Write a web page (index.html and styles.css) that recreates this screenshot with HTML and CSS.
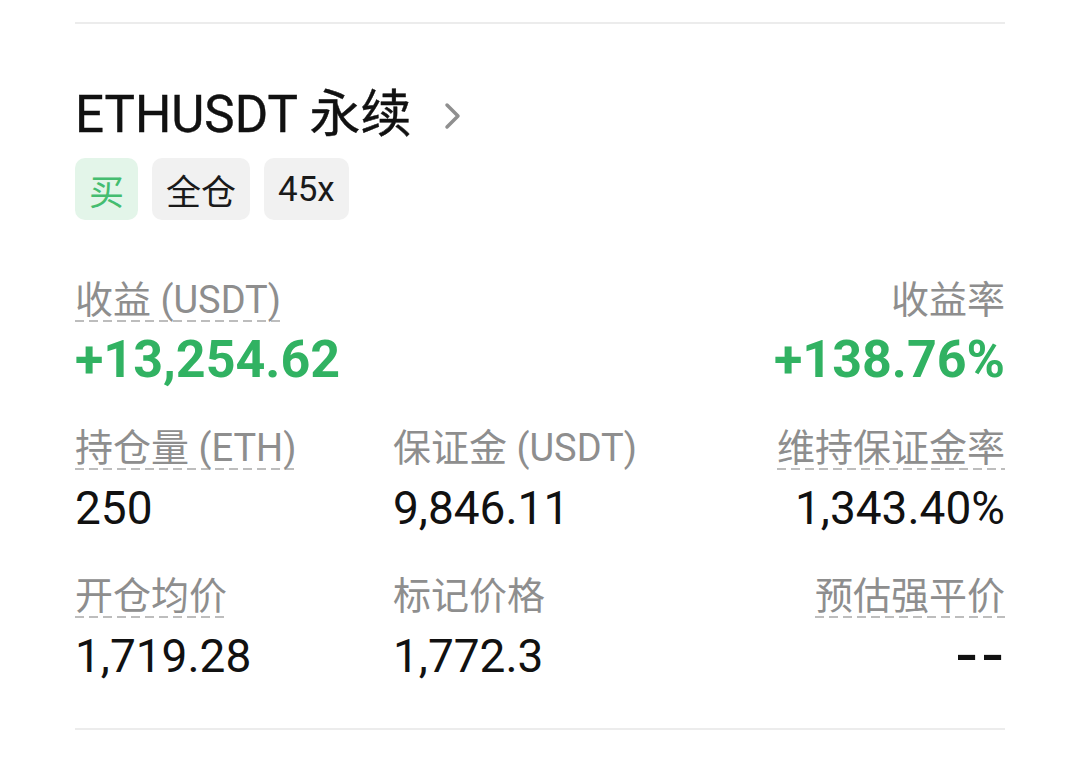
FILE: index.html
```html
<!DOCTYPE html>
<html lang="zh-CN">
<head>
    <meta charset="UTF-8">
    <meta name="viewport" content="width=device-width, initial-scale=1.0">
    <title>ETHUSDT 永续 - 持仓</title>
    <link rel="stylesheet" href="styles.css">
</head>
<body>
    <div class="position-card">
        <div class="divider"></div>

        <div class="symbol">
            <span class="symbol-name">ETHUSDT 永续</span>
            <svg class="chevron" width="22" height="30" viewBox="0 0 22 30">
                <polyline points="5,4 16,15 5,26" fill="none" stroke="#8f8f8f" stroke-width="3.5" stroke-linecap="round" stroke-linejoin="round"/>
            </svg>
        </div>

        <div class="tags">
            <span class="tag tag-buy">买</span>
            <span class="tag">全仓</span>
            <span class="tag">45x</span>
        </div>

        <div class="stats">
            <div class="stat">
                <span class="stat-label tip">收益 (USDT)</span>
                <span class="stat-value pnl">+13,254.62</span>
            </div>
            <div class="stat right col-3">
                <span class="stat-label">收益率</span>
                <span class="stat-value pnl">+138.76%</span>
            </div>

            <div class="stat">
                <span class="stat-label tip">持仓量 (ETH)</span>
                <span class="stat-value">250</span>
            </div>
            <div class="stat">
                <span class="stat-label">保证金 (USDT)</span>
                <span class="stat-value">9,846.11</span>
            </div>
            <div class="stat right">
                <span class="stat-label tip">维持保证金率</span>
                <span class="stat-value">1,343.40%</span>
            </div>

            <div class="stat">
                <span class="stat-label tip">开仓均价</span>
                <span class="stat-value">1,719.28</span>
            </div>
            <div class="stat">
                <span class="stat-label">标记价格</span>
                <span class="stat-value">1,772.3</span>
            </div>
            <div class="stat right">
                <span class="stat-label tip">预估强平价</span>
                <span class="stat-value empty">--</span>
            </div>
        </div>

        <div class="divider"></div>
    </div>
</body>
</html>
```

FILE: styles.css
```css
/* Base */
* {
    margin: 0;
    padding: 0;
    box-sizing: border-box;
}

body {
    background: #fff;
    color: #111;
    font-family: Roboto, "Noto Sans CJK SC", sans-serif;
}

.position-card {
    margin: 0 75px;
    padding-top: 22px;
}

.divider {
    height: 2px;
    background: #ececec;
}

/* Symbol header */
.symbol {
    display: flex;
    align-items: center;
    gap: 30px;
    margin-top: 62px;
    height: 58px;
}

.symbol-name {
    font-size: 51px;
    line-height: 58px;
    font-weight: 400;
    color: #111;
    -webkit-text-stroke: 0.4px #111;
}

.chevron {
    margin-top: 2px;
}

.tags {
    display: flex;
    gap: 14px;
    margin-top: 14px;
}

.tag {
    height: 62px;
    min-width: 62px;
    padding: 0 14px;
    display: flex;
    align-items: center;
    justify-content: center;
    font-size: 35px;
    background: #f1f1f1;
    border-radius: 10px;
    color: #1a1a1a;
}

.tag-buy {
    background: #e3f5e9;
    color: #45bd70;
}

/* Stats grid */
.stats {
    display: grid;
    grid-template-columns: 318px 1fr 1fr;
    row-gap: 40px;
    margin-top: 58px;
    margin-bottom: 46px;
}

.stat {
    display: flex;
    flex-direction: column;
    align-items: flex-start;
    gap: 12px;
}

.stat.right {
    align-items: flex-end;
}

.col-3 {
    grid-column: 3;
}

.stat-label {
    font-size: 38px;
    line-height: 44px;
    color: #8e8e8e;
}

/* dashed hint underline */
.stat-label.tip {
    background: repeating-linear-gradient(to right, #bdbdbd 0 9px, transparent 9px 14px) left bottom / 100% 2px no-repeat;
}

.stat-value {
    font-size: 46px;
    line-height: 52px;
    color: #111;
}

.stat-value.pnl {
    font-size: 52px;
    font-weight: 700;
    color: #31b262;
}

.stat-value.empty {
    font-weight: 700;
    letter-spacing: 1px;
    margin-right: -1px;
    transform: scaleX(1.35);
    transform-origin: right center;
}
```
